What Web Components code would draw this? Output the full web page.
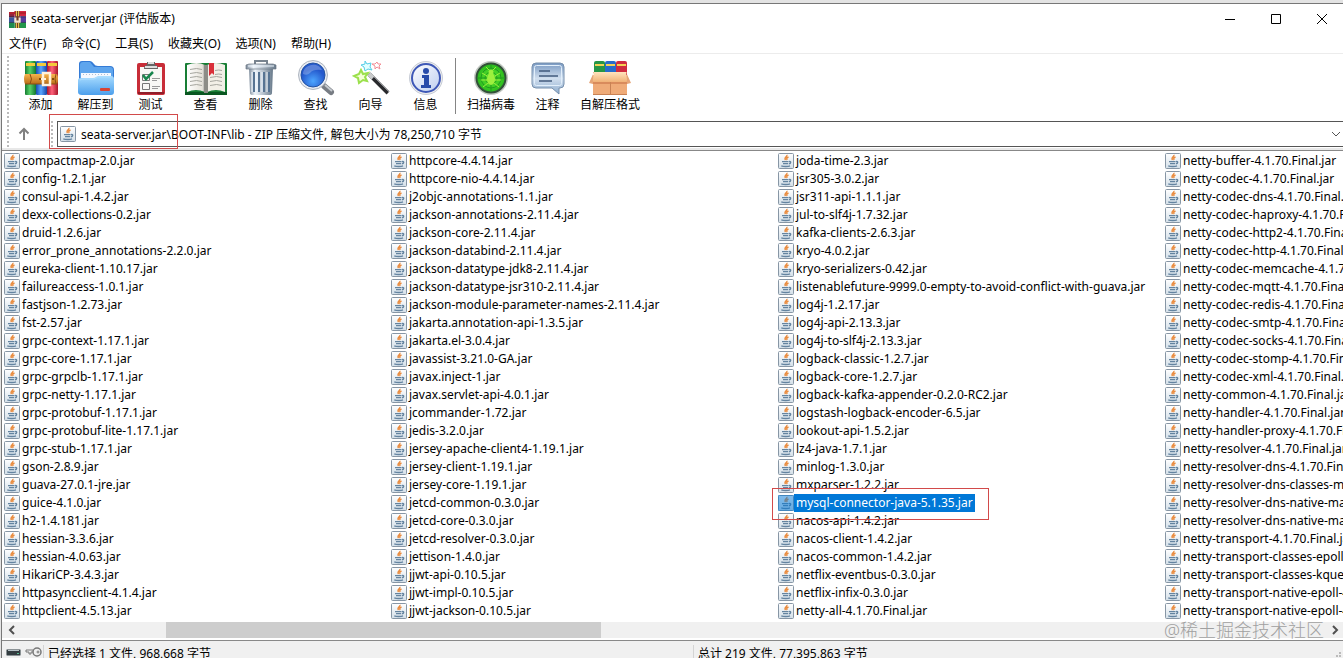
<!DOCTYPE html>
<html lang="zh-CN">
<head>
<meta charset="utf-8">
<title>seata-server.jar</title>
<style>
    html, body {
        height: 100%;
    }
    body {
        margin: 0;
        overflow: hidden;
        background: #e3e3e3;
        color: #000;
        font: 12px/18px "Noto Sans", "Noto Sans CJK SC", sans-serif;
    }
</style>
</head>
<body>
<rar-window>
    <title-bar slot="head">seata-server.jar (评估版本)</title-bar>
    <menu-bar slot="head"></menu-bar>
    <tool-bar slot="head"></tool-bar>
    <address-bar slot="head"></address-bar>
    <jar-list></jar-list>
    <scroll-strip slot="foot">@稀土掘金技术社区</scroll-strip>
    <status-bar slot="foot">
        <span slot="selected">已经选择 1 文件, 968,668 字节</span>
        <span slot="total">总计 219 文件, 77,395,863 字节</span>
    </status-bar>
</rar-window>

<script>
const ICONS = {
    app: `<svg viewBox="0 0 16 16" width="17" height="17">
        <path fill="#8c2741" d="M0 1h5v5H0z"/><path fill="#3b579f" d="M0 6h5v5H0z"/><path fill="#1e8b50" d="M0 11h5v5H0z"/>
        <path fill="#d62644" d="M5 0h11v5H5z"/><path fill="#583a9c" d="M5 5h11v6H5z"/><path fill="#23964b" d="M5 11h11v5H5z"/>
        <path fill="#b4202e" d="M0 1h16v2H0z"/><path fill="#713a28" d="M6 0h4v16H6z"/>
        <path fill="none" stroke="#e8c54a" d="M7 0v5M9 0v5M7 11v5M9 11v5"/>
        <path fill="#f4e6cf" d="M5 6h2v3h2V6h2v5H5z"/><path stroke="#17213d" stroke-width=".6" d="M0 5.5h5M11 5.5h5M0 10.8h5M11 10.8h5"/></svg>`,
    java: `<svg viewBox="0 0 16 16" width="16" height="16">
        <defs><linearGradient id="j" x2="0" y2="1"><stop stop-color="#fff"/><stop offset="1" stop-color="#d3dfe8"/></linearGradient></defs>
        <rect x=".5" y=".5" width="15" height="15" rx="1" fill="url(#j)" stroke="#8796a5"/>
        <path fill="none" stroke="#e98a3c" stroke-width="1.400" d="M8.800 1.800c1.200 1.700-3.300 2.600-1.300 5.200M10.500 4c-2.200.9-2 1.900-1.300 3"/>
        <path fill="none" stroke="#6484a0" stroke-width="1.300" d="M4 8.700h6.500M5 10.700h5M3.300 12.900c2 .8 7 .8 8.700 0M11 8.600c2.400-.6 2.200 1.900-.2 2.300"/></svg>`,
    add: `<svg viewBox="0 0 36 36" width="36" height="36">
        <defs><linearGradient id="g"><stop stop-color="#157c31"/><stop offset=".45" stop-color="#57d169"/><stop offset="1" stop-color="#14762e"/></linearGradient>
        <linearGradient id="b"><stop stop-color="#174caf"/><stop offset=".45" stop-color="#58a5ff"/><stop offset="1" stop-color="#1745a4"/></linearGradient>
        <linearGradient id="r"><stop stop-color="#aa142e"/><stop offset=".45" stop-color="#ff627a"/><stop offset="1" stop-color="#a51529"/></linearGradient>
        <linearGradient id="s" x2="0" y2="1"><stop stop-color="#f7b34c"/><stop offset="1" stop-color="#b86d18"/></linearGradient></defs>
        <rect x="2" y="1" width="11" height="34" rx="1" fill="url(#g)"/><rect x="13" y="1" width="11" height="34" rx="1" fill="url(#b)"/><rect x="24" y="1" width="11" height="34" rx="1" fill="url(#r)"/>
        <path fill="#f3ca3c" d="M3 3h9v3H3zM14 3h9v3h-9zM25 3h9v3h-9z"/>
        <path fill="url(#s)" d="M2 14h32q2 5 0 10H2q-2-5 0-10z"/>
        <path fill="none" stroke="#8c4d14" d="M7 14q3 5 0 10M33 14q-2 5 0 10M2 24h32"/>
        <path fill="none" stroke="#fff2de" stroke-width="2.500" d="M20 13h7v12h-7z"/>
        <path stroke="#fff2de" stroke-width="2" d="M18 19h5"/><circle cx="17" cy="19" r="1" fill="#633000"/><circle cx="30" cy="19" r="1" fill="#633000"/></svg>`,
    extract: `<svg viewBox="0 0 38 36" width="38" height="36">
        <defs><linearGradient id="f" x2="0" y2="1"><stop stop-color="#a8dcff"/><stop offset="1" stop-color="#4b9fec"/></linearGradient></defs>
        <path fill="#347bd6" d="M2 25V4q0-3 3-3h8q2 0 4 3 1 2 4 2h12q4 0 4 4v15z"/>
        <path fill="#5ea5ed" d="M3 18V5q0-3 3-3h7l4 5h16q3 0 3 3v8z"/>
        <path fill="#f5f9ff" d="M4 13h30v10H4z"/><path stroke="#b2bfd1" stroke-dasharray="1 2" d="M6 14.500h27"/>
        <path fill="url(#f)" d="M1 20q0-2 3-2h12q2 0 3-1l2-1h13q3 0 3 3v13q0 3-3 3H5q-4 0-4-3z"/>
        <path fill="none" stroke="#b0e0ff" d="M3 20q1-1 5-1h9l4-2h13"/><rect x="23" y="28" width="10" height="3" rx="1" fill="#d94435"/></svg>`,
    test: `<svg viewBox="0 0 30 36" width="30" height="36">
        <rect x="1" y="3" width="28" height="32" rx="2" fill="#c82d38"/><path fill="#8f1e29" d="M2 32h26v2H2z"/>
        <path fill="#f8f8f5" d="M4 7h22v25H4z"/><path fill="#666" d="M8 9q0-4 3-4V2h8v3q3 0 3 4z"/>
        <path fill="#ddd" d="M9 6h12v2H9zM12 2h6v2h-6z"/>
        <path fill="none" stroke="#777" d="M6.500 14.500h7v6h-7zM6.500 23.500h7v6h-7z"/>
        <path fill="none" stroke="#18864d" stroke-width="2.500" d="m7 15 3 4 7-7"/>
        <path stroke="#999" d="M16 18.500h8M16 20.500h5M16 26.500h8M16 28.500h6"/></svg>`,
    view: `<svg viewBox="0 0 44 36" width="44" height="36">
        <defs><linearGradient id="p"><stop stop-color="#fff"/><stop offset=".85" stop-color="#e7e4db"/><stop offset="1" stop-color="#999"/></linearGradient></defs>
        <rect x="1" y="3" width="42" height="32" rx="1" fill="#187e35"/><path fill="#0a5721" d="M1 32h42v3H1z"/>
        <path fill="url(#p)" d="M3 5q10-4 18 0v27q-9-4-18 0z"/><path fill="#f2efe7" d="M23 5q9-4 18 0v27q-9-4-18 0z"/>
        <path fill="#8d8d87" d="M20 5h4v28h-4z"/>
        <path fill="none" stroke="#a6a69f" d="M6 9.500q7-2 12 0M6 13.500q7-2 12 0M6 17.500q7-2 12 0M6 21.500q7-2 12 0M6 25.500q7-2 12 0M26 17.500q7-2 12 0M26 21.500q7-2 12 0M26 25.500q7-2 12 0M31 10.500q4-1 7 0M31 14.500q4-1 7 0"/>
        <path fill="#d92f39" d="M25 3h5v12l-2-2-3 3z"/></svg>`,
    remove: `<svg viewBox="0 0 32 36" width="32" height="36">
        <defs><linearGradient id="t"><stop stop-color="#7d8b9a"/><stop offset=".25" stop-color="#eef4fa"/><stop offset=".6" stop-color="#b5c0cb"/><stop offset="1" stop-color="#667889"/></linearGradient></defs>
        <path fill="none" stroke="#78838f" stroke-width="2" d="M10 4V1h12v3"/>
        <path fill="url(#t)" d="M4 8h24l-1 25q0 2-3 2H8q-3 0-3-2z"/><path fill="url(#t)" stroke="#6b7784" stroke-width=".7" d="M1 9V5l3-1h24l3 1v4z"/>
        <path fill="none" stroke="#577493" stroke-width="2" d="M9 12v20M14 12v20M19 12v20M24 12v20"/>
        <path stroke="#eef6ff" d="M7 12v20M12 12v20M17 12v20M22 12v20M3 6h26"/></svg>`,
    find: `<svg viewBox="0 0 38 36" width="38" height="36">
        <defs><radialGradient id="l" cy=".75"><stop stop-color="#4da6ff"/><stop offset="1" stop-color="#2458cc"/></radialGradient></defs>
        <path stroke="#777c83" stroke-width="6" stroke-linecap="round" d="m27 26 7 6"/><path stroke="#c5cacf" stroke-width="2" d="m28 25 7 6"/>
        <circle cx="16" cy="15" r="14.500" fill="#e7eaf1" stroke="#aeb5bf"/><circle cx="16" cy="15" r="12" fill="url(#l)" stroke="#2454a2"/>
        <path fill="#fff" opacity=".25" d="M6 14C6 4 21 1 25 10q-9-1-12 3-3 3-7 1z"/></svg>`,
    wizard: `<svg viewBox="0 0 38 36" width="38" height="36">
        <path fill="#f3ffd5" stroke="#9be04c" stroke-width="2" d="m9 10 2 4 5-1-3 4 2 4-4-1-4 3-1-5-4-2 5-2z"/>
        <path fill="#e3ffff" stroke="#55cde6" d="m13 1 2 3 4-1-1 4 2 3-4-1-3 2-1-4-3-2 4-1z"/>
        <path fill="#fff" stroke="#f28d95" d="m25 2 1 2h3l-2 2 1 3-3-2-2 2V6l-3-2h3z"/>
        <path stroke="#292a2d" stroke-width="4" d="m17 14 19 19"/><path stroke="#8b8d91" d="m19 14 18 18"/>
        <path stroke="#c9cbcc" stroke-width="4" d="m17 14 4 4"/></svg>`,
    info: `<svg viewBox="0 0 36 36" width="36" height="36">
        <defs><linearGradient id="i" x2="1" y2="1"><stop stop-color="#fff"/><stop offset="1" stop-color="#bccdf0"/></linearGradient></defs>
        <circle cx="18" cy="18" r="16.500" fill="#eee" stroke="#c7ccd6"/><circle cx="18" cy="18" r="14" fill="url(#i)" stroke="#3e58b7" stroke-width="2"/>
        <circle cx="18" cy="11" r="3" fill="#284baa"/><path fill="#284baa" d="M14 15h7v10h2v3H13v-3h3v-7h-2z"/></svg>`,
    scan: `<svg viewBox="0 0 36 36" width="36" height="36">
        <defs><radialGradient id="v"><stop stop-color="#62ec2f"/><stop offset="1" stop-color="#22b31c"/></radialGradient></defs>
        <circle cx="18" cy="18" r="16" fill="url(#v)" stroke="#c2c7c2" stroke-width="2"/><circle cx="18" cy="18" r="14.500" fill="none" stroke="#33503a" stroke-width="2"/>
        <g fill="none" stroke="#209b20"><circle cx="18" cy="18" r="10"/><circle cx="18" cy="18" r="6"/><path d="M4 18h28M18 4v28"/></g>
        <ellipse cx="18" cy="19" rx="4" ry="6" fill="#9df03e"/><circle cx="18" cy="12" r="2.500" fill="#9df03e"/>
        <path fill="none" stroke="#9df03e" d="m14 16-5-3M22 16l5-3M14 20H8M22 20h6M15 23l-5 4M21 23l5 4M16 10l-3-3M20 10l3-3"/></svg>`,
    comment: `<svg viewBox="0 0 34 36" width="34" height="36">
        <defs><linearGradient id="c" x2="0" y2="1"><stop stop-color="#7899c2"/><stop offset=".5" stop-color="#d1dfef"/><stop offset="1" stop-color="#8daccd"/></linearGradient></defs>
        <path fill="url(#c)" stroke="#7790ad" d="M5 3h24q4 0 4 4v17q0 4-4 4h-1v6l-7-6H5q-4 0-4-4V7q0-4 4-4z"/>
        <rect x="3.500" y="5.500" width="27" height="20" rx="2" fill="none" stroke="#e2effb"/>
        <path stroke="#415b7d" stroke-width="1.500" d="M8 11h11M8 16h19M8 21h13"/></svg>`,
    sfx: `<svg viewBox="0 0 44 36" width="44" height="36">
        <defs><linearGradient id="o" x2="0" y2="1"><stop stop-color="#ffe3bd"/><stop offset="1" stop-color="#f0b277"/></linearGradient></defs>
        <rect x="6" y="1" width="11" height="16" rx="2" fill="#269546"/><rect x="17" y="1" width="11" height="16" rx="2" fill="#276bcb"/><rect x="28" y="1" width="11" height="16" rx="2" fill="#cf2b40"/>
        <path stroke="#f4d154" stroke-width="2" d="M7 5h9M18 5h9M29 5h9"/>
        <path fill="#efab78" d="M5 15h34v19H5z"/><path fill="#d98b5c" d="M5 22h34v2H5z"/>
        <path fill="#e5a577" d="m6 12-5 11 4 1V12zM38 12l5 11-4 1V12z"/><path fill="url(#o)" d="M6 12h32l1 8q0 2-2 2H7q-3 0-2-3z"/>
        <path stroke="#c98254" d="M22.500 22v12M5 34.500h34"/></svg>`
};

class TitleBar extends HTMLElement {
    constructor() {
        super();
        this.attachShadow({ mode: 'open' });
    }

    connectedCallback() {
        this.shadowRoot.innerHTML = `
            <style>
                :host { display: flex; align-items: center; height: 30px; padding-left: 7px; margin-right: -2px; }
                .app { display: flex; margin-right: 5px; }
                .caption { flex: 1; }
                button { width: 46px; height: 28px; padding: 0; border: 0; background: none; }
                button svg { display: block; margin: auto; fill: none; stroke: #000; }
            </style>
            <span class="app">${ICONS.app}</span>
            <span class="caption"><slot></slot></span>
            <button aria-label="最小化"><svg width="12" height="12"><path d="M1 6.500h10"/></svg></button>
            <button aria-label="最大化"><svg width="12" height="12"><path d="M1.500 1.500h9v9h-9z"/></svg></button>
            <button aria-label="关闭"><svg width="12" height="12"><path d="m1 1 10 10M11 1 1 11"/></svg></button>
        `;
    }
}

class MenuBar extends HTMLElement {
    constructor() {
        super();
        this.attachShadow({ mode: 'open' });
        this.items = ['文件(F)', '命令(C)', '工具(S)', '收藏夹(O)', '选项(N)', '帮助(H)'];
    }

    connectedCallback() {
        this.shadowRoot.innerHTML = `
            <style>
                :host { display: flex; gap: 15px; height: 19px; padding-left: 7px; border-bottom: 1px solid #ececec; }
                button { padding: 0; border: 0; background: none; color: inherit; font: inherit; }
            </style>
            ${this.items.map(item => `<button>${item}</button>`).join('')}
        `;
    }
}

class ToolButton extends HTMLElement {
    constructor() {
        super();
        this.attachShadow({ mode: 'open' });
    }

    connectedCallback() {
        this.shadowRoot.innerHTML = `
            <style>
                :host { display: block; min-width: 55px; }
                button {
                    display: flex; flex-direction: column; align-items: center;
                    width: 100%; padding: 0 5px; border: 0; background: none;
                    color: inherit; font: inherit; white-space: nowrap;
                }
                svg { display: block; }
            </style>
            <button>${ICONS[this.getAttribute('icon')]}<slot></slot></button>
        `;
    }
}

class ToolBar extends HTMLElement {
    constructor() {
        super();
        this.attachShadow({ mode: 'open' });
    }

    connectedCallback() {
        this.shadowRoot.innerHTML = `
            <style>
                :host { display: flex; height: 67px; padding-left: 5px; }
                .grip { width: 2px; margin: 2px 4px 0 0; background: repeating-linear-gradient(#bbb 0 2px, #fff 2px 4px); }
                .tools { display: flex; padding-top: 6px; }
                .line { width: 1px; height: 56px; margin: -2px 6px 0 2px; background: #858585; }
            </style>
            <div class="grip"></div>
            <div class="tools">
                <tool-button icon="add">添加</tool-button>
                <tool-button icon="extract">解压到</tool-button>
                <tool-button icon="test">测试</tool-button>
                <tool-button icon="view">查看</tool-button>
                <tool-button icon="remove">删除</tool-button>
                <tool-button icon="find">查找</tool-button>
                <tool-button icon="wizard">向导</tool-button>
                <tool-button icon="info">信息</tool-button>
                <div class="line"></div>
                <tool-button icon="scan">扫描病毒</tool-button>
                <tool-button icon="comment">注释</tool-button>
                <tool-button icon="sfx">自解压格式</tool-button>
            </div>
        `;
    }
}

class AddressBar extends HTMLElement {
    constructor() {
        super();
        this.attachShadow({ mode: 'open' });
    }

    connectedCallback() {
        this.shadowRoot.innerHTML = `
            <style>
                :host { position: relative; display: flex; height: 26px; padding: 0 0 3px 5px; }
                .grip { width: 2px; background: repeating-linear-gradient(#bbb 0 2px, #fff 2px 4px); }
                .up { width: 30px; margin-right: 12px; padding: 0; border: 0; background: none; }
                .up svg { display: block; margin: auto; }
                .box { display: flex; flex: 1; align-items: center; margin-left: 4px; padding-left: 2px; border: 1px solid #555; border-right: 0; }
                .box svg { flex: none; }
                select {
                    flex: 1; min-width: 0; padding: 2px 0 0 5px; border: 0; outline: 0;
                    appearance: none; background: none; color: inherit; font: inherit;
                }
                .arrow { margin-right: 2px; }
                .mark { position: absolute; left: 47px; top: -7px; width: 127px; height: 33px; border: 1px solid #d24a4a; pointer-events: none; }
            </style>
            <div class="grip"></div>
            <button class="up" aria-label="向上"><svg width="12" height="14" fill="none" stroke="#808080" stroke-width="2"><path d="M6 13V2M1.500 6.500 6 2l4.500 4.500"/></svg></button>
            <div class="grip"></div>
            <div class="box">
                ${ICONS.java}
                <select aria-label="地址"><option>seata-server.jar\\BOOT-INF\\lib - ZIP 压缩文件, 解包大小为 78,250,710 字节</option></select>
                <svg class="arrow" width="10" height="8" fill="none" stroke="#555"><path d="m1 2 4 4 4-4"/></svg>
            </div>
            <div class="mark"></div>
        `;
    }
}

class JarItem extends HTMLElement {
    constructor() {
        super();
        this.attachShadow({ mode: 'open' });
    }

    connectedCallback() {
        this.shadowRoot.innerHTML = `
            <style>
                :host { position: relative; display: flex; align-items: center; height: 18px; white-space: nowrap; }
                .icon { position: relative; display: flex; }
                .name { padding: 0 2px; }
                .mark { display: none; }
                :host([selected]) .name { background: #0078d7; color: #fff; }
                :host([selected]) .icon::after { content: ''; position: absolute; inset: 0; background: #0078d7; opacity: .5; }
                :host([selected]) .mark {
                    display: block; position: absolute; left: -6px; top: -6px;
                    width: 215px; height: 30px; border: 1px solid #d24a4a; z-index: 1;
                }
            </style>
            <span class="icon">${ICONS.java}</span>
            <span class="name"><slot></slot></span>
            <span class="mark"></span>
        `;
    }
}

class JarList extends HTMLElement {
    constructor() {
        super();
        this.attachShadow({ mode: 'open' });
        this.selected = 'mysql-connector-java-5.1.35';
        this.names = `
            compactmap-2.0 config-1.2.1 consul-api-1.4.2 dexx-collections-0.2 druid-1.2.6
            error_prone_annotations-2.2.0 eureka-client-1.10.17 failureaccess-1.0.1 fastjson-1.2.73 fst-2.57
            grpc-context-1.17.1 grpc-core-1.17.1 grpc-grpclb-1.17.1 grpc-netty-1.17.1 grpc-protobuf-1.17.1
            grpc-protobuf-lite-1.17.1 grpc-stub-1.17.1 gson-2.8.9 guava-27.0.1-jre guice-4.1.0 h2-1.4.181
            hessian-3.3.6 hessian-4.0.63 HikariCP-3.4.3 httpasyncclient-4.1.4 httpclient-4.5.13
            httpcore-4.4.14 httpcore-nio-4.4.14 j2objc-annotations-1.1 jackson-annotations-2.11.4
            jackson-core-2.11.4 jackson-databind-2.11.4 jackson-datatype-jdk8-2.11.4
            jackson-datatype-jsr310-2.11.4 jackson-module-parameter-names-2.11.4
            jakarta.annotation-api-1.3.5 jakarta.el-3.0.4 javassist-3.21.0-GA javax.inject-1
            javax.servlet-api-4.0.1 jcommander-1.72 jedis-3.2.0 jersey-apache-client4-1.19.1
            jersey-client-1.19.1 jersey-core-1.19.1 jetcd-common-0.3.0 jetcd-core-0.3.0
            jetcd-resolver-0.3.0 jettison-1.4.0 jjwt-api-0.10.5 jjwt-impl-0.10.5 jjwt-jackson-0.10.5
            joda-time-2.3 jsr305-3.0.2 jsr311-api-1.1.1 jul-to-slf4j-1.7.32 kafka-clients-2.6.3
            kryo-4.0.2 kryo-serializers-0.42 listenablefuture-9999.0-empty-to-avoid-conflict-with-guava
            log4j-1.2.17 log4j-api-2.13.3 log4j-to-slf4j-2.13.3 logback-classic-1.2.7 logback-core-1.2.7
            logback-kafka-appender-0.2.0-RC2 logstash-logback-encoder-6.5 lookout-api-1.5.2
            lz4-java-1.7.1 minlog-1.3.0 mxparser-1.2.2 mysql-connector-java-5.1.35 nacos-api-1.4.2
            nacos-client-1.4.2 nacos-common-1.4.2 netflix-eventbus-0.3.0 netflix-infix-0.3.0
            netty-all-4.1.70.Final
            netty-buffer-4.1.70.Final netty-codec-4.1.70.Final netty-codec-dns-4.1.70.Final
            netty-codec-haproxy-4.1.70.Final netty-codec-http2-4.1.70.Final netty-codec-http-4.1.70.Final
            netty-codec-memcache-4.1.70.Final netty-codec-mqtt-4.1.70.Final netty-codec-redis-4.1.70.Final
            netty-codec-smtp-4.1.70.Final netty-codec-socks-4.1.70.Final netty-codec-stomp-4.1.70.Final
            netty-codec-xml-4.1.70.Final netty-common-4.1.70.Final netty-handler-4.1.70.Final
            netty-handler-proxy-4.1.70.Final netty-resolver-4.1.70.Final netty-resolver-dns-4.1.70.Final
            netty-resolver-dns-classes-macos-4.1.70.Final netty-resolver-dns-native-macos-4.1.70.Final
            netty-resolver-dns-native-macos-4.1.70.Final netty-transport-4.1.70.Final
            netty-transport-classes-epoll-4.1.70.Final netty-transport-classes-kqueue-4.1.70.Final
            netty-transport-native-epoll-4.1.70.Final netty-transport-native-epoll-4.1.70.Final
        `.trim().split(/\s+/);
    }

    connectedCallback() {
        this.shadowRoot.innerHTML = `
            <style>
                :host {
                    display: grid; grid-auto-flow: column; align-content: start;
                    grid-template-rows: repeat(26, 18px); grid-auto-columns: 387px;
                    padding: 1px 0 0 2px; overflow: hidden;
                }
            </style>
            ${this.names.map(name => `<jar-item${name === this.selected ? ' selected' : ''}>${name}.jar</jar-item>`).join('')}
        `;
    }
}

class ScrollStrip extends HTMLElement {
    constructor() {
        super();
        this.attachShadow({ mode: 'open' });
    }

    connectedCallback() {
        this.shadowRoot.innerHTML = `
            <style>
                :host { position: relative; display: flex; height: 16px; padding-left: 1px; background: #f0f0f0; border-bottom: 2px solid #fff; }
                button { width: 17px; padding: 0; border: 0; background: none; }
                button svg { display: block; margin: auto; fill: none; stroke: #505050; stroke-width: 2; }
                .track { display: grid; flex: 1; grid-template-columns: 146fr 435fr 725fr; }
                .thumb { grid-column: 2; background: #cdcdcd; }
                .water { position: absolute; right: 19px; bottom: -2px; color: #a0a0a0; font-size: 18px; font-weight: 300; line-height: 20px; }
            </style>
            <button aria-label="向左滚动"><svg width="8" height="10"><path d="M6 1 2 5l4 4"/></svg></button>
            <div class="track"><div class="thumb"></div></div>
            <button aria-label="向右滚动"><svg width="8" height="10"><path d="m2 1 4 4-4 4"/></svg></button>
            <span class="water"><slot></slot></span>
        `;
    }
}

class StatusBar extends HTMLElement {
    constructor() {
        super();
        this.attachShadow({ mode: 'open' });
    }

    connectedCallback() {
        this.shadowRoot.innerHTML = `
            <style>
                :host { display: flex; height: 17px; overflow: hidden; background: #f0f0f0; border-top: 1px solid #888; }
                .icons { display: flex; gap: 4px; width: 37px; padding: 6px 0 0 4px; flex: none; }
                .cell { flex: 1; margin-top: 4px; padding-left: 4px; border-left: 1px solid #d4d4d4; white-space: nowrap; }
                .size { align-self: end; margin: 0 1px 0 -7px; }
            </style>
            <div class="icons">
                <svg width="15" height="11"><rect x=".5" y="2.500" width="14" height="6" rx="1" fill="#333c40" stroke="#8b9295"/><path stroke="#b5c0c5" d="M2 3.500h11"/><path fill="#58bd91" d="M11 6h2v1h-2z"/></svg>
                <svg width="17" height="11" fill="none" stroke="#777"><circle cx="12" cy="5" r="4" stroke-width="1.500"/><circle cx="13" cy="5" r="1"/><path d="M8 3H1v2h3v2h2V5h2"/></svg>
            </div>
            <div class="cell"><slot name="selected"></slot></div>
            <div class="cell"><slot name="total"></slot></div>
            <svg class="size" width="6" height="6" fill="#bbb"><path d="M3 0h2v2H3zM0 3h2v2H0zM3 3h2v2H3z"/></svg>
        `;
    }
}

class RarWindow extends HTMLElement {
    constructor() {
        super();
        this.attachShadow({ mode: 'open' });
    }

    connectedCallback() {
        this.shadowRoot.innerHTML = `
            <style>
                :host { display: flex; flex-direction: column; height: 100vh; box-sizing: border-box; padding: 3px 0 0 1px; }
                .frame { display: flex; flex: 1; flex-direction: column; min-height: 0; background: #fff; border: solid #777; border-width: 1px 0 0 1px; }
                .content { display: grid; flex: 1; min-height: 0; border-top: 1px solid #888; box-shadow: 0 -2px #e8e8e8; }
            </style>
            <div class="frame">
                <slot name="head"></slot>
                <div class="content"><slot></slot></div>
                <slot name="foot"></slot>
            </div>
        `;
    }
}

customElements.define('title-bar', TitleBar);
customElements.define('menu-bar', MenuBar);
customElements.define('tool-button', ToolButton);
customElements.define('tool-bar', ToolBar);
customElements.define('address-bar', AddressBar);
customElements.define('jar-item', JarItem);
customElements.define('jar-list', JarList);
customElements.define('scroll-strip', ScrollStrip);
customElements.define('status-bar', StatusBar);
customElements.define('rar-window', RarWindow);
</script>
</body>
</html>
